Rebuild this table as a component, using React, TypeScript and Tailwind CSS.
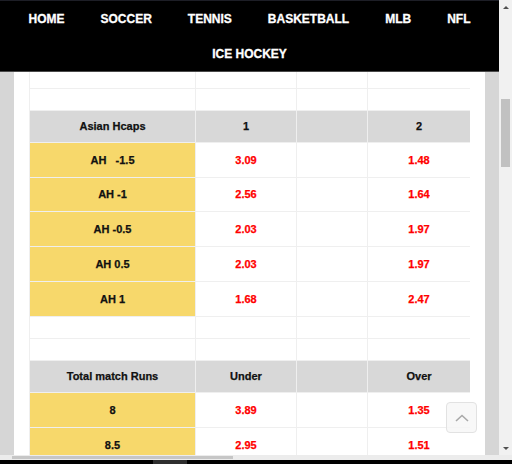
import React from "react";

const navItems = ["HOME", "SOCCER", "TENNIS", "BASKETBALL", "MLB", "NFL", "ICE HOCKEY"];

type Row =
  | { kind: "blank"; h: string }
  | { kind: "head"; a: string; b: string; c: string }
  | { kind: "data"; a: string; b: string; c: string; h: string };

const rows: Row[] = [
  { kind: "blank", h: "h-[17px]" },
  { kind: "blank", h: "h-[22px]" },
  { kind: "head", a: "Asian Hcaps", b: "1", c: "2" },
  { kind: "data", a: "AH\u00a0\u00a0 -1.5", b: "3.09", c: "1.48", h: "h-[35px]" },
  { kind: "data", a: "AH -1", b: "2.56", c: "1.64", h: "h-[34px]" },
  { kind: "data", a: "AH -0.5", b: "2.03", c: "1.97", h: "h-[35px]" },
  { kind: "data", a: "AH 0.5", b: "2.03", c: "1.97", h: "h-[35px]" },
  { kind: "data", a: "AH 1", b: "1.68", c: "2.47", h: "h-[35px]" },
  { kind: "blank", h: "h-[22px]" },
  { kind: "blank", h: "h-[22px]" },
  { kind: "head", a: "Total match Runs", b: "Under", c: "Over" },
  { kind: "data", a: "8", b: "3.89", c: "1.35", h: "h-[35px]" },
  { kind: "data", a: "8.5", b: "2.95", c: "1.51", h: "h-[35px]" },
];

const cell = "border border-[#efefef] p-0 text-center align-middle";

export default function App() {
  return (
    <div
      className="relative w-[512px] h-[464px] overflow-hidden flex flex-col bg-white"
      style={{ fontFamily: '"Liberation Sans", Arial, sans-serif' }}
    >
      <div className="flex h-[455px]">
        {/* page viewport */}
        <div className="w-[499px] flex flex-col overflow-hidden">
          <nav className="bg-black border-t border-t-[#1d1e26] border-b border-b-[#4a4a4a] flex flex-wrap justify-center h-[72px] shrink-0">
            {navItems.map((n) => (
              <a
                key={n}
                className="px-[18px] h-[35px] flex items-center text-white font-bold text-[12px] whitespace-nowrap [-webkit-text-stroke:0.3px]"
              >
                {n}
              </a>
            ))}
          </nav>
          <div className="flex flex-1 min-h-0">
            <div className="w-[14px] bg-[#d6d6d6] shrink-0" />
            <div className="w-[15px] shrink-0" />
            <div className="w-[441px] shrink-0 overflow-hidden">
              <table className="w-[441px] table-fixed border-collapse -mt-px">
                <colgroup>
                  <col className="w-[166px]" />
                  <col className="w-[101px]" />
                  <col className="w-[71px]" />
                  <col className="w-[103px]" />
                </colgroup>
                <tbody className="text-[11px] font-bold [-webkit-text-stroke:0.25px]">
                  {rows.map((r, i) => {
                    if (r.kind === "blank") {
                      return (
                        <tr key={i} className={r.h}>
                          <td className={cell} />
                          <td className={cell} />
                          <td className={cell} />
                          <td className={cell} />
                        </tr>
                      );
                    }
                    if (r.kind === "head") {
                      return (
                        <tr key={i} className="h-[32px] bg-[#d8d8d8] text-[#111]">
                          <td className={cell}>{r.a}</td>
                          <td className={cell}>{r.b}</td>
                          <td className={cell} />
                          <td className={cell}>{r.c}</td>
                        </tr>
                      );
                    }
                    return (
                      <tr key={i} className={r.h}>
                        <td className={`${cell} bg-[#f7d86b] text-[#111] whitespace-pre`}>{r.a}</td>
                        <td className={`${cell} text-[#ff0000]`}>{r.b}</td>
                        <td className={cell} />
                        <td className={`${cell} text-[#ff0000]`}>{r.c}</td>
                      </tr>
                    );
                  })}
                </tbody>
              </table>
            </div>
            <div className="w-[15px] shrink-0" />
            <div className="w-[14px] bg-[#d6d6d6] shrink-0" />
          </div>
        </div>
        {/* vertical scrollbar */}
        <div className="w-[13px] bg-[#f1f1f1] flex flex-col items-center">
          <div className="h-[14px] flex items-center justify-center">
            <div className="w-0 h-0 border-l-[3px] border-r-[3px] border-b-[3px] border-l-transparent border-r-transparent border-b-[#505050]" />
          </div>
          <div className="h-[85px]" />
          <div className="h-[68px] w-[9px] bg-[#c1c1c1]" />
          <div className="flex-1" />
          <div className="h-[14px] flex items-center justify-center">
            <div className="w-0 h-0 border-l-[3px] border-r-[3px] border-t-[3px] border-l-transparent border-r-transparent border-t-[#505050]" />
          </div>
        </div>
      </div>
      {/* horizontal scrollbar */}
      <div className="h-[5px] bg-[#ececec] flex items-center">
        <div className="ml-[12px] w-[221px] h-[3px] bg-[#c6c6c6]" />
      </div>
      <div className="h-[4px] bg-black flex">
        <div className="ml-[153px] w-[34px] bg-[#2e2e2e]" />
      </div>

      {/* back to top */}
      <button className="absolute left-[446px] top-[402px] w-[31px] h-[31px] rounded-[4px] border border-[#e2e2e2] bg-[#f6f6f6]/80 flex items-center justify-center">
        <svg width="14" height="8" viewBox="0 0 14 8" fill="none">
          <path d="M1 7 L7 1.5 L13 7" stroke="#a9a9a9" strokeWidth="1.6" />
        </svg>
      </button>
    </div>
  );
}
